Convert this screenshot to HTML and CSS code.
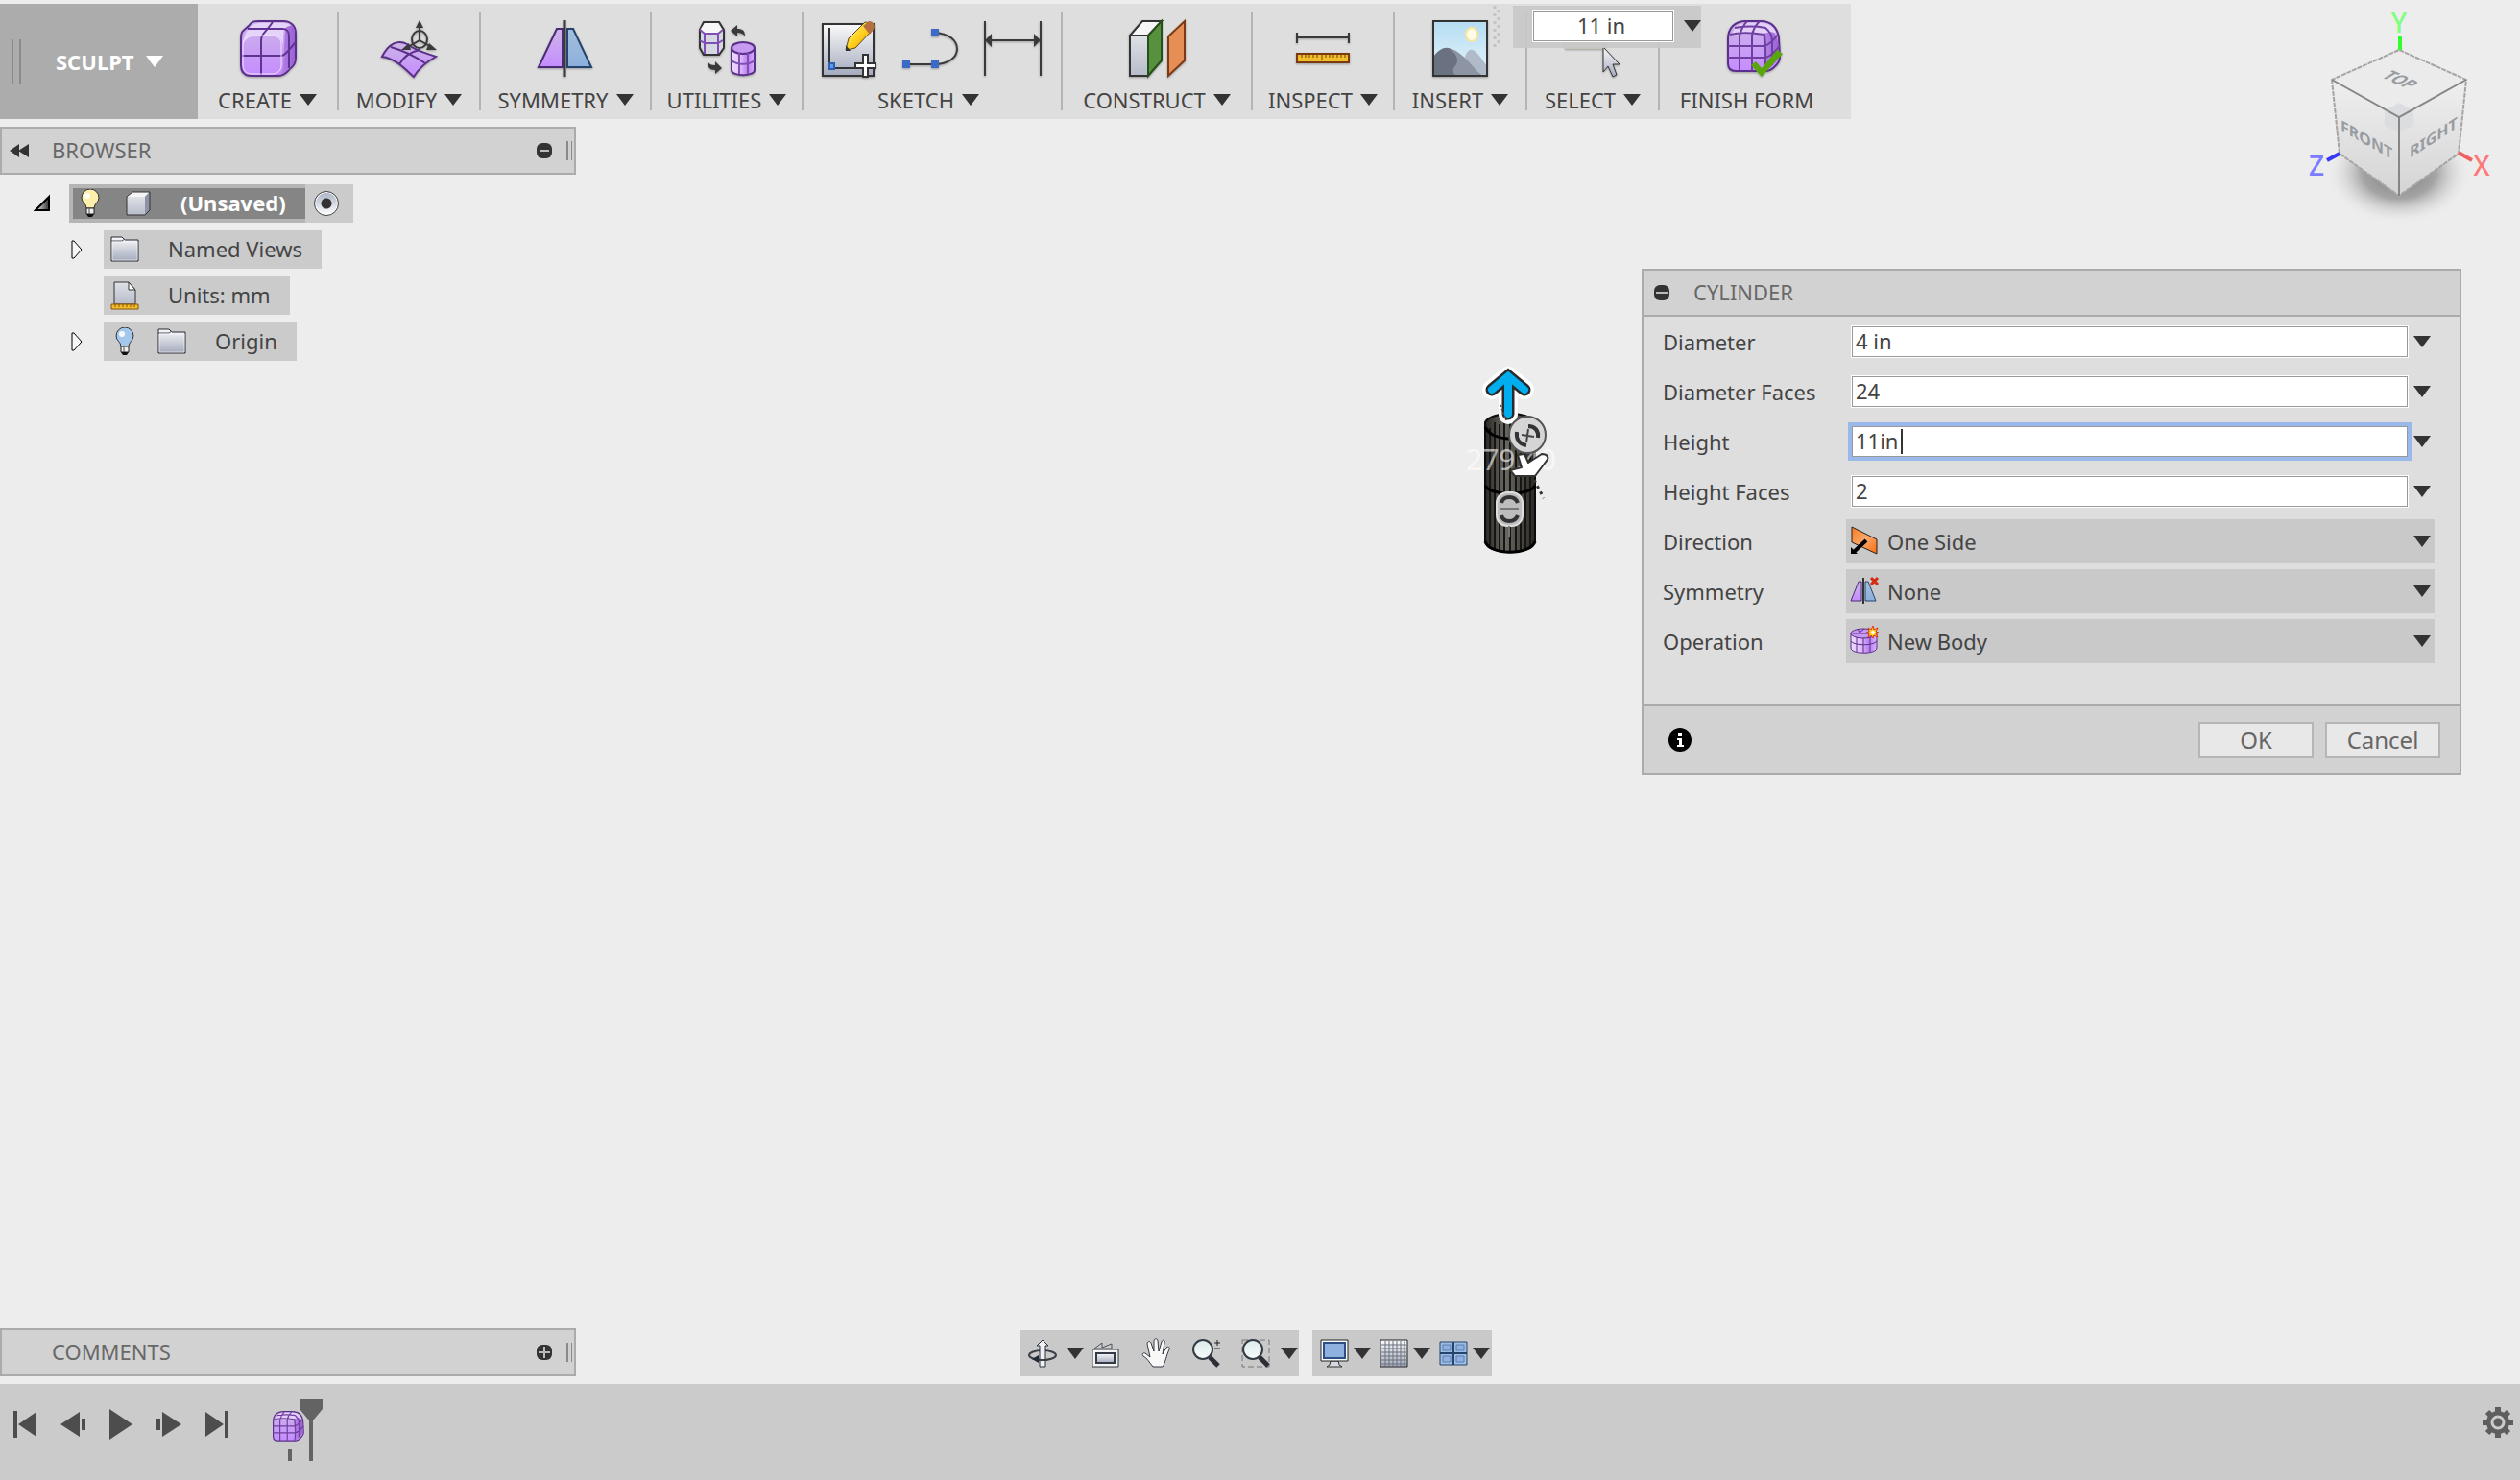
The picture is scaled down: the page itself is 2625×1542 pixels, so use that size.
FILE: index.html
```html
<!DOCTYPE html>
<html lang="en">
<head>
<meta charset="utf-8">
<meta name="viewport" content="width=device-width, initial-scale=1">
<title>Sculpt workspace</title>
<link rel="stylesheet" href="styles.css">
</head>
<body>
<svg class="sprite" aria-hidden="true">
  <defs>
    <linearGradient id="purple" x1="0" y1="0" x2="0" y2="1"><stop offset="0" stop-color="#cdb6e6"/><stop offset="1" stop-color="#c58cff"/></linearGradient>
    <linearGradient id="purple-side" x1="0" y1="0" x2="1" y2="0"><stop offset="0" stop-color="#b98bea"/><stop offset="1" stop-color="#9a5fd6"/></linearGradient>
    <linearGradient id="tube" x1="0" y1="0" x2="1" y2="0"><stop offset="0" stop-color="#ecd9ff"/><stop offset=".35" stop-color="#e2c4fb"/><stop offset=".7" stop-color="#b97df0"/><stop offset="1" stop-color="#d9b3fa"/></linearGradient>
    <linearGradient id="blue" x1="0" y1="0" x2="0" y2="1"><stop offset="0" stop-color="#a5bedd"/><stop offset="1" stop-color="#8bb0dc"/></linearGradient>
    <linearGradient id="steel" x1="0" y1="0" x2="0" y2="1"><stop offset="0" stop-color="#fafafb"/><stop offset="1" stop-color="#a4aabd"/></linearGradient>
    <linearGradient id="silver" x1="0" y1="0" x2="0" y2="1"><stop offset="0" stop-color="#dfe1e6"/><stop offset="1" stop-color="#b7bccb"/></linearGradient>
    <linearGradient id="sky" x1="0" y1="0" x2="0" y2="1"><stop offset="0" stop-color="#b5dcf2"/><stop offset="1" stop-color="#e6f4fb"/></linearGradient>
    <linearGradient id="orange" x1="0" y1="0" x2="1" y2="1"><stop offset="0" stop-color="#ff7a1c"/><stop offset=".5" stop-color="#f6a86c"/><stop offset="1" stop-color="#ff6a0a"/></linearGradient>
    <linearGradient id="pencil" x1="0" y1="0" x2="1" y2="1"><stop offset="0" stop-color="#fff2a0"/><stop offset=".5" stop-color="#ffd21e"/><stop offset="1" stop-color="#f08a00"/></linearGradient>
    <linearGradient id="toggle" x1="0" y1="0" x2="1" y2="0"><stop offset="0" stop-color="#f0f0f0"/><stop offset="1" stop-color="#333"/></linearGradient>
    <linearGradient id="lens" x1="0" y1="0" x2="0" y2="1"><stop offset="0" stop-color="#dcebea"/><stop offset="1" stop-color="#f7fbfb"/></linearGradient>
    <linearGradient id="face" x1="0" y1="0" x2="0" y2="1"><stop offset="0" stop-color="#efefef"/><stop offset="1" stop-color="#d4d4d4"/></linearGradient>
    <radialGradient id="shade"><stop offset="0" stop-color="#777"/><stop offset=".5" stop-color="#8c8c8c" stop-opacity=".75"/><stop offset="1" stop-color="#ededed" stop-opacity="0"/></radialGradient>
    <linearGradient id="barrel" x1="0" y1="0" x2="1" y2="0"><stop offset="0" stop-color="#2a2825"/><stop offset=".4" stop-color="#6a6861"/><stop offset="1" stop-color="#2b2926"/></linearGradient>
  </defs>
  <symbol id="i-caret" viewBox="0 0 18 12"><path d="M0 0h18L9 12z" fill="currentColor"/></symbol>
  <symbol id="i-bulb" viewBox="0 0 20 30">
    <path d="M6 20C6 15 1 14 1 9a9 9 0 0 1 18 0c0 5-5 6-5 11z" fill="currentColor" stroke="#333"/>
    <path d="M6 20h8v6H6z" fill="#eee" stroke="#222"/><path d="M9 20v6" stroke="#555"/><path d="M6 26h8l-2 3H8z" fill="#111"/>
    <circle cx="7" cy="7" r="3" fill="#fff" opacity=".9"/>
  </symbol>
  <symbol id="i-folder" viewBox="0 0 30 28">
    <path d="M1 26V1h11l3 3h14v22z" fill="url(#steel)" stroke="#26282f"/><path d="M1 5h11l3-2" fill="none" stroke="#4a5060"/><path d="M2 25V6h26v19z" fill="none" stroke="#fff" opacity=".6"/>
  </symbol>
  <symbol id="i-form" viewBox="0 0 58 58">
    <path d="M1 20C1 8 8 1 20 1h15c12 0 18 8 19 18l1 20c0 5-8 14-14 14H9c-5 0-8-3-8-8z" fill="url(#purple)" stroke="#5a2f8a" stroke-width="2"/>
    <path d="M37 14C47 8 52 14 53 24l1 14c-3 6-8 12-14 14z" fill="url(#purple-side)"/>
    <path d="M4 17C8 5 14 3 22 3h14c8 0 13 5 15 10-6-2-12 0-14 2H13c-4 0-7 1-9 2z" fill="#e3cff8"/>
    <path d="M3 15c12-3 24-2 36 0 1 8 2 28 0 38M1 27h38c6-2 11-8 14-12M1 39h39c6-1 11-8 15-12M13 53V16C15 9 18 4 21 1M26 53V16c1-6 4-11 8-15M8 8c12-2 22-2 32 0 5 4 7 8 7 14v25" fill="none" stroke="#6e3fa0" stroke-width="2"/>
  </symbol>
</svg>

<header class="toolbar">
  <button class="workspace-switch" type="button"><span class="grip"></span>SCULPT <svg class="caret"><use href="#i-caret"/></svg></button>

  <button class="tool tool-create" type="button">
    <svg class="tool-icon" viewBox="0 0 58 60"><path d="M1 20C1 10 3 12 9 6 13 1 14 1 20 1h25c8 0 13 5 13 13v25c0 8-4 9-8 14-4 4-7 5-11 5H12C5 58 1 54 1 47z" fill="url(#purple)" stroke="#5a2f8a" stroke-width="2"/><path d="M47 8c6-6 10-2 10 6v25c0 7-4 9-8 13-3 4-6 5-9 5 3-2 5-5 5-10z" fill="url(#purple-side)"/><path d="M5 16C10 6 14 3 20 3h25c4 0 6 1 8 3-6 0-8 4-8 12v8c-2-8-5-9-12-9H15c-6 0-9 3-12 8z" fill="#e6d3fa"/><path d="M22 57V22c0-8 3-7 12-20M8 9h36c5 0 7 2 7 8v33M1 37h42c5 0 9-8 15-14" fill="none" stroke="#5f3391" stroke-width="2"/><path d="M3 46V26c0-7 4-10 10-10h20c6 0 10 3 10 10v20c0 7-4 10-10 10H13C7 56 3 53 3 46z" fill="none" stroke="#f0e2ff" stroke-width="1"/></svg>
    <span class="tool-label">CREATE <svg class="caret"><use href="#i-caret"/></svg></span>
  </button>
  <button class="tool tool-modify" type="button">
    <svg class="tool-icon" viewBox="0 0 58 60"><path d="M1 38C8 24 18 20 27 25c9 7 19 9 30 13-9 5-17 11-23 21C24 50 15 40 1 38z" fill="url(#purple)" stroke="#5a2f8a" stroke-width="2"/><path d="M10 28c14 4 26 10 36 17M19 46c5-9 12-13 21-15" fill="none" stroke="#5a2f8a" stroke-width="2"/><g stroke="#3a3a3a" stroke-width="2" fill="none"><ellipse cx="40" cy="20" rx="8" ry="9"/><path d="M40 5v16L26 29M40 21l14 8"/></g><path d="M40 0l4 8h-8zM21 31l8-7 2 7zM58 31l-8-7-3 7z" fill="#3a3a3a"/></svg>
    <span class="tool-label">MODIFY <svg class="caret"><use href="#i-caret"/></svg></span>
  </button>
  <button class="tool tool-symmetry" type="button">
    <svg class="tool-icon" viewBox="0 0 58 60"><path d="M20 9h6v40H1z" fill="url(#purple)" stroke="#4b2a77" stroke-width="2"/><path d="M31 9h6l19 40H31z" fill="url(#blue)" stroke="#24446e" stroke-width="2"/><path d="M28 0v59" stroke="#3a3a3a" stroke-width="3"/></svg>
    <span class="tool-label">SYMMETRY <svg class="caret"><use href="#i-caret"/></svg></span>
  </button>
  <button class="tool tool-utilities" type="button">
    <svg class="tool-icon" viewBox="0 0 58 60"><path d="M5 2h16l5 8v19l-5 7H5l-4-7V10z" fill="#d5d8e0" stroke="#333" stroke-width="2"/><path d="M6 3h14l4 7-4 4H6L2 9z" fill="#f7f7f8"/><path d="M1 10l5 4h14l5-4M6 14v21M20 14v21M1 21l5 3h14l5-3" fill="none" stroke="#7f4fb5" stroke-width="2"/><path d="M34 29v23c0 7 24 7 24 0V29" fill="url(#tube)" stroke="#5a2f8a" stroke-width="2"/><ellipse cx="46" cy="29" rx="12" ry="6" fill="#c79af2" stroke="#5a2f8a" stroke-width="2"/><path d="M34 42c6 5 18 5 24 0M42 34v22M51 34v22" fill="none" stroke="#7f4fb5" stroke-width="2"/><path d="M33 11l7-6v4c6 0 8 2 8 8-2-3-4-4-8-4v4zM24 50l-7 6v-4c-6 0-8-3-8-9 2 3 4 4 8 4v-4z" fill="#3a3a3a"/></svg>
    <span class="tool-label">UTILITIES <svg class="caret"><use href="#i-caret"/></svg></span>
  </button>
  <button class="tool tool-sketch" type="button">
    <span class="tool-icons">
      <svg class="tool-icon" viewBox="0 0 58 60"><path d="M1 4h53v54H1z" fill="url(#steel)" stroke="#333" stroke-width="2"/><path d="M8 8v42h28" fill="none" stroke="#333" stroke-width="2"/><path d="M8 45h5v6H8z" fill="#5b9af0" stroke="#2a60b0" stroke-width="2"/><path d="M25 31l3-12L45 2c4 0 8 4 8 8L35 29z" fill="url(#pencil)" stroke="#5a4a20"/><path d="M43 6l6-5c5 0 8 5 4 10l-3 4z" fill="#b5703f"/><path d="M25 32v-6l5 6z" fill="#333"/><path d="M43 36h5v9h8v5h-8v9h-5v-9h-8v-5h8z" fill="#fff" stroke="#333" stroke-width="2"/></svg>
      <svg class="tool-icon" viewBox="0 0 58 60"><path d="M4 46h29c32 0 32-32 0-33" fill="none" stroke="#3a3a3a" stroke-width="2"/><path d="M0 42h8v8H0zM30 42h8v8h-8zM30 9h8v8h-8z" fill="#3a6bc8"/></svg>
      <svg class="tool-icon tool-icon-dimension" viewBox="0 0 62 60"><path d="M2 1v57M60 1v57M6 21h50" stroke="#3a3a3a" stroke-width="2"/><path d="M2 21l7-7v14zM60 21l-7-7v14z" fill="#3a3a3a"/></svg>
    </span>
    <span class="tool-label">SKETCH <svg class="caret"><use href="#i-caret"/></svg></span>
  </button>
  <button class="tool tool-construct" type="button">
    <svg class="tool-icon" viewBox="0 0 58 60"><path d="M1 16L14 1h20L20 16z" fill="#f6f6f7" stroke="#333" stroke-width="2"/><path d="M1 16h19v42H1z" fill="url(#silver)" stroke="#333" stroke-width="2"/><path d="M20 16L34 1v41L20 58z" fill="#57903f" stroke="#25501a" stroke-width="2"/><path d="M41 17L58 1v41L41 58z" fill="#e58f57" stroke="#7c3b14" stroke-width="2"/></svg>
    <span class="tool-label">CONSTRUCT <svg class="caret"><use href="#i-caret"/></svg></span>
  </button>
  <button class="tool tool-inspect" type="button">
    <svg class="tool-icon" viewBox="0 0 58 60"><path d="M2 13v11M56 13v11M2 18h54" stroke="#3a3a3a" stroke-width="2"/><path d="M2 35h54v9H2z" fill="#efc02c" stroke="#7a3b10" stroke-width="2"/><path d="M7 36v3m4-3v3m4-3v3m4-3v3m4-3v3m5-3v5m4-5v3m4-3v3m4-3v3m4-3v3m4-3v3m4-3v3" stroke="#7a3b10"/></svg>
    <span class="tool-label">INSPECT <svg class="caret"><use href="#i-caret"/></svg></span>
  </button>
  <button class="tool tool-insert" type="button">
    <svg class="tool-icon" viewBox="0 0 58 60"><path d="M1 1h56v57H1z" fill="url(#sky)"/><ellipse cx="41" cy="15" rx="6" ry="7" fill="#fffbe6" stroke="#f8e69a" stroke-width="2"/><path d="M32 46c2-12 6-16 10-15 4 1 10 10 15 17v10H38z" fill="#b0bac8"/><path d="M1 38c8-10 14-11 20-7 10 7 20 18 31 27H1z" fill="#6a7180"/><path d="M18 30c6 4 10 10 7 16-5 6-4 9 0 12h26C42 48 28 30 18 30z" fill="#8d95a5"/><path d="M1 1h56v57H1z" fill="none" stroke="#333" stroke-width="2"/></svg>
    <span class="tool-label">INSERT <svg class="caret"><use href="#i-caret"/></svg></span>
  </button>
  <button class="tool tool-select" type="button">
    <svg class="tool-icon" viewBox="0 0 58 60"><path d="M1 10h40v19H1z" fill="#dde3d3" stroke="#c2c9b7" stroke-width="2"/><path d="M40 28v26l5-6 5 11 4-2-4-11h7z" fill="url(#steel)" stroke="#333" stroke-width="1"/></svg>
    <span class="tool-label">SELECT <svg class="caret"><use href="#i-caret"/></svg></span>
  </button>
  <button class="tool tool-finish" type="button">
    <svg class="tool-icon" viewBox="0 0 58 60"><use href="#i-form" width="58" height="58"/><path d="M25 47l5-4 6 7 16-19 6 4-22 24z" fill="#58a60c"/></svg>
    <span class="tool-label">FINISH FORM</span>
  </button>

  <div class="value-popup">
    <svg class="value-grip" viewBox="0 0 8 44"><path d="M2 0v44M6 4v40" stroke="#c4c4c4" stroke-width="3" stroke-dasharray="3 5"/></svg>
    <div class="value-box">
      <input class="value-input" type="text" value="11 in" aria-label="Height value">
      <button class="drop" type="button" aria-label="Value options"><svg class="caret"><use href="#i-caret"/></svg></button>
    </div>
  </div>
</header>

<main class="workspace">
  <section class="browser" aria-label="Browser">
    <div class="panel">
      <button class="panel-collapse" type="button" aria-label="Collapse"><svg width="20" height="14" viewBox="0 0 20 14"><path d="M10 0v14L0 7zM20 0v14L9 7z" fill="#333"/></svg></button>
      <h2 class="panel-title">BROWSER</h2>
      <button class="panel-toggle" type="button" aria-label="Minimize"><svg width="16" height="16" viewBox="0 0 16 16"><rect width="16" height="16" rx="6" fill="#333"/><path d="M3 8h10" stroke="#bbb" stroke-width="2"/></svg></button>
      <span class="panel-grip"></span>
    </div>
    <ul class="tree">
      <li>
        <div class="tree-row">
          <button class="tree-toggle" type="button" aria-label="Collapse"><svg width="16" height="16" viewBox="0 0 16 16"><path d="M1 15L15 1v14z" fill="url(#toggle)" stroke="#000" stroke-width="2"/></svg></button>
          <div class="tree-item tree-root">
            <div class="tree-selected">
              <svg class="bulb bulb-on"><use href="#i-bulb"/></svg>
              <svg class="component" viewBox="0 0 28 28"><path d="M2 7l6-5h18l-5 5z" fill="#f4f4f6"/><path d="M2 7h19v19H2z" fill="url(#silver)"/><path d="M21 7l5-5v19l-5 5z" fill="#8e93a3"/><path d="M2 7l6-5h18v19l-5 5H2z" fill="none" stroke="#333"/></svg>
              <span class="tree-name">(Unsaved)</span>
            </div>
            <label class="activate"><input type="radio" name="active" aria-label="Activate component" checked></label>
          </div>
        </div>
        <ul class="tree-children">
          <li class="tree-row">
            <button class="tree-toggle" type="button" aria-label="Expand"><svg width="16" height="20" viewBox="0 0 16 20"><path d="M3 1h2l8 9-8 9H3z" fill="#f7f7f7" stroke="#000" stroke-width="1"/></svg></button>
            <div class="tree-item"><svg class="folder"><use href="#i-folder"/></svg><span class="tree-name">Named Views</span></div>
          </li>
          <li class="tree-row">
            <span class="tree-toggle"></span>
            <div class="tree-item"><svg class="folder" viewBox="0 0 30 30"><path d="M4 24V1h15l7 8v15z" fill="url(#silver)" stroke="#333"/><path d="M19 1v8h7z" fill="#fff" stroke="#333"/><path d="M1 24h28v5H1z" fill="#efc02c" stroke="#8a5206"/><path d="M5 24v3m4-3v3m4-3v3m4-3v3m4-3v3m4-3v3" stroke="#8a5206"/></svg><span class="tree-name">Units: mm</span></div>
          </li>
          <li class="tree-row">
            <button class="tree-toggle" type="button" aria-label="Expand"><svg width="16" height="20" viewBox="0 0 16 20"><path d="M3 1h2l8 9-8 9H3z" fill="#f7f7f7" stroke="#000" stroke-width="1"/></svg></button>
            <div class="tree-item"><svg class="bulb bulb-off"><use href="#i-bulb"/></svg><svg class="folder"><use href="#i-folder"/></svg><span class="tree-name">Origin</span></div>
          </li>
        </ul>
      </li>
    </ul>
  </section>

  <svg class="model" viewBox="0 0 150 220" role="img" aria-label="Cylinder preview">
    <path d="M47 70v124c4 15 48 15 52 0V70c-6-12-46-12-52 0z" fill="url(#barrel)" stroke="#0c0c0c" stroke-width="2"/>
    <path d="M52 76v122M57 70v132M62 72v131M67 70v134M73 70v135M79 70v135M84 72v132M89 70v131M94 74v125" stroke="#171512" stroke-width="2"/>
    <path d="M47 75c8 16 42 16 52 0M47 136c6 11 46 11 52 0M47 194c4 15 48 15 52 0" fill="none" stroke="#000" stroke-width="3"/>
    <text class="model-size" x="27" y="120">279.40</text>
    <path d="M71 24v38M54 36l17-14 17 14" fill="none" stroke="#fff" stroke-width="20" stroke-linecap="round" stroke-linejoin="round"/>
    <path d="M71 22v39M54 36l17-14 17 14" fill="none" stroke="#2a2a2a" stroke-width="13" stroke-linecap="round" stroke-linejoin="miter"/>
    <path d="M71 22v39M54 36l17-14 17 14" fill="none" stroke="#00aeef" stroke-width="8" stroke-linecap="round"/>
    <path d="M63 52l6 16" stroke="#555" stroke-width="2" stroke-dasharray="2 2"/>
    <circle cx="91" cy="83" r="19" fill="#d5d5d5" stroke="#555" stroke-width="2"/>
    <path d="M90 94c-7-1-11-6-10-14M92 74c7 0 11 5 10 12" fill="none" stroke="#333" stroke-width="4"/><path d="M85 83l13 2M92 77l-2 14" stroke="#444" stroke-width="2"/>
    <path d="M81 104l7-1 4 9 14-9c6 0 8 4 5 7L99 126H78l-5-6 12-3z" fill="#fff" stroke="#333" stroke-width="2" stroke-linejoin="round"/>
    <path d="M98 130l10 19" stroke="#333" stroke-width="3" stroke-dasharray="3 4"/>
    <rect x="59" y="143" width="27" height="35" rx="11" fill="#bdbdbd" stroke="#dedede" stroke-width="2"/>
    <path d="M64 154c2-8 14-8 17 0M64 167c2 8 14 8 17 0" fill="none" stroke="#333" stroke-width="4"/><path d="M63 160h19M72 178v12" stroke="#777" stroke-width="2"/>
  </svg>

  <svg class="viewcube" viewBox="0 0 200 240" role="img" aria-label="View cube">
    <ellipse cx="79" cy="180" rx="76" ry="54" fill="url(#shade)"/>
    <path d="M9 83l70-31 70 31-70 39z" fill="#ebebeb"/>
    <path d="M9 83l8 77 62 44v-82zM149 83l-8 77-62 44v-82z" fill="url(#face)"/>
    <path d="M79 107l15 8v16l-15 7-15-7v-16z" fill="#dcdde0"/>
    <path d="M9 83l8 77 62 44 62-44 8-77-70-31z" fill="none" stroke="#a5a5a5" stroke-width="2" stroke-dasharray="5 1"/>
    <path d="M9 83l70 39 70-39M79 122v82" fill="none" stroke="#868686" stroke-width="2"/>
    <text class="cube-face" transform="translate(18 136) skewY(29)">FRONT</text>
    <text class="cube-face" transform="translate(90 165) skewY(-33)">RIGHT</text>
    <text class="cube-face" transform="translate(60 80) rotate(25) skewX(-35)">TOP</text>
    <path d="M80 37v15" stroke="#2fff2f" stroke-width="4"/><path d="M17 160l-13 7" stroke="#3838f4" stroke-width="4"/><path d="M141 159l14 8" stroke="#f06060" stroke-width="4"/>
    <text class="axis axis-y" x="79" y="34">Y</text><text class="axis axis-z" x="-7" y="183">Z</text><text class="axis axis-x" x="165" y="183">X</text>
  </svg>

  <form class="dialog" aria-labelledby="dialog-title">
    <header class="dialog-head">
      <button type="button" aria-label="Collapse"><svg width="16" height="16" viewBox="0 0 16 16"><rect width="16" height="16" rx="6" fill="#333"/><path d="M2 8h12" stroke="#bbb" stroke-width="2"/></svg></button>
      <h2 class="panel-title" id="dialog-title">CYLINDER</h2>
    </header>
    <div class="dialog-body">
      <div class="field"><label for="diameter">Diameter</label><div class="text-box"><input id="diameter" type="text" value="4 in"></div><button class="drop" type="button" aria-label="Diameter options"><svg class="caret"><use href="#i-caret"/></svg></button></div>
      <div class="field"><label for="diameter-faces">Diameter Faces</label><div class="text-box"><input id="diameter-faces" type="text" value="24"></div><button class="drop" type="button" aria-label="Diameter face options"><svg class="caret"><use href="#i-caret"/></svg></button></div>
      <div class="field"><label for="height">Height</label><div class="text-box is-active"><input id="height" type="text" value="11in"><span class="text-cursor"></span></div><button class="drop" type="button" aria-label="Height options"><svg class="caret"><use href="#i-caret"/></svg></button></div>
      <div class="field"><label for="height-faces">Height Faces</label><div class="text-box"><input id="height-faces" type="text" value="2"></div><button class="drop" type="button" aria-label="Height face options"><svg class="caret"><use href="#i-caret"/></svg></button></div>
      <div class="field"><label for="direction">Direction</label>
        <div class="select-box"><select id="direction"><option>One Side</option></select>
          <svg class="select-icon" viewBox="0 0 30 30"><path d="M2 1l26 13v15L2 17z" fill="url(#orange)" stroke="#222"/><path d="M17 15L4 27" stroke="#000" stroke-width="4"/><path d="M1 22v7h7z" fill="#000"/></svg>
          <svg class="caret"><use href="#i-caret"/></svg></div></div>
      <div class="field"><label for="symmetry">Symmetry</label>
        <div class="select-box"><select id="symmetry"><option>None</option></select>
          <svg class="select-icon" viewBox="0 0 30 30"><path d="M9 6h3v20H1z" fill="url(#purple)" stroke="#4b2a77"/><path d="M16 6h3l8 20H16z" fill="url(#blue)" stroke="#24446e"/><path d="M14 2v27" stroke="#333" stroke-width="2"/><path d="M22 2l7 7M29 2l-7 7" stroke="#d42a10" stroke-width="3"/></svg>
          <svg class="caret"><use href="#i-caret"/></svg></div></div>
      <div class="field"><label for="operation">Operation</label>
        <div class="select-box"><select id="operation"><option>New Body</option></select>
          <svg class="select-icon" viewBox="0 0 30 30"><path d="M1 8v15c0 7 27 7 27 0V8" fill="url(#tube)" stroke="#5a2f8a"/><ellipse cx="14" cy="8" rx="13" ry="5" fill="#c79af2" stroke="#5a2f8a"/><path d="M1 16c3 5 24 5 27 0M7 12v15M14 13v15M21 12v15M8 3l2 4 5-4M3 8h22" fill="none" stroke="#5a2f8a"/><path d="M24 0l1 4 4-2-2 4 3 1-3 1 2 4-4-2-1 3-2-3-3 2 1-4-3-1 3-1-1-4 3 2z" fill="#ffcf1e" stroke="#e0340c"/><circle cx="24" cy="7" r="2" fill="#fff"/></svg>
          <svg class="caret"><use href="#i-caret"/></svg></div></div>
    </div>
    <footer class="dialog-foot">
      <button class="info" type="button" aria-label="Information"><svg width="24" height="24" viewBox="0 0 24 24"><circle cx="12" cy="12" r="12" fill="#000"/><path d="M10 5h4v3h-4zM9 10h5v7h2v2H9v-2h2v-5H9z" fill="#fff"/></svg></button>
      <button class="btn" type="submit">OK</button>
      <button class="btn" type="button">Cancel</button>
    </footer>
  </form>

  <div class="dock">
    <section class="panel">
      <h2 class="panel-title panel-title-indent">COMMENTS</h2>
      <button class="panel-toggle" type="button" aria-label="Expand"><svg width="16" height="16" viewBox="0 0 16 16"><rect width="16" height="16" rx="6" fill="#333"/><path d="M2 8h12M8 2v12" stroke="#bbb" stroke-width="2"/></svg></button>
      <span class="panel-grip"></span>
    </section>
    <nav class="nav" aria-label="Navigation">
      <div class="nav-bar nav-view">
        <button type="button" aria-label="Orbit"><svg width="30" height="30" viewBox="0 0 30 30"><ellipse cx="15" cy="17" rx="14" ry="5" fill="none" stroke="#3a3f48" stroke-width="2"/><path d="M12 29V7H9l6-6 6 6h-3v22z" fill="#f0f0f6" stroke="#2b303a" stroke-width="1"/><path d="M12 22h8" stroke="#3a3f48" stroke-width="2"/><path d="M4 21l7-4v8z" fill="#222a35"/></svg></button>
        <button type="button" aria-label="Orbit options"><svg class="caret"><use href="#i-caret"/></svg></button>
        <button type="button" aria-label="Look at"><svg width="30" height="30" viewBox="0 0 30 30"><path d="M1 11h27v18H1z" fill="#f4f4f4" stroke="#333a44" stroke-width="1"/><path d="M5 15h19v10H5z" fill="url(#steel)" stroke="#333a44" stroke-width="2"/><path d="M3 10l8-6v5l10-4v5z" fill="#ccc" stroke="#4a505a"/></svg></button>
        <button type="button" aria-label="Pan"><svg width="30" height="32" viewBox="0 0 30 32"><path d="M12 30C8 25 6 21 2 19c-2-2 0-4 2-3l5 4L6 6c0-3 3-3 4-1l3 9V3c0-3 4-3 4 0l1 11 3-10c1-3 4-2 3 1l-2 12 4-7c2-2 4 0 3 2-3 6-4 14-7 18z" fill="#f8f8f8" stroke="#333a44" stroke-width="1" stroke-linejoin="round"/></svg></button>
        <button type="button" aria-label="Zoom"><svg width="30" height="30" viewBox="0 0 30 30"><path d="M19 19l9 9" stroke="#2c2f36" stroke-width="5"/><circle cx="12" cy="11" r="10" fill="url(#lens)" stroke="#333a44" stroke-width="2"/><path d="M24 4h6M27 1v6M24 10h6" stroke="#222"/></svg></button>
        <button type="button" aria-label="Zoom window"><svg width="30" height="30" viewBox="0 0 30 30"><path d="M1 1h28v28H1z" fill="none" stroke="#777" stroke-width="1" stroke-dasharray="6 3"/><path d="M19 19l9 9" stroke="#2c2f36" stroke-width="5"/><circle cx="12" cy="11" r="10" fill="url(#lens)" stroke="#333a44" stroke-width="2"/></svg></button>
        <button type="button" aria-label="Zoom options"><svg class="caret"><use href="#i-caret"/></svg></button>
      </div>
      <div class="nav-bar nav-display">
        <button type="button" aria-label="Display settings"><svg width="30" height="30" viewBox="0 0 30 30"><path d="M11 23h8l1 4 3 2H7l3-2z" fill="#d5dae2" stroke="#333"/><path d="M1 1h28v22H1z" fill="#fafafa" stroke="#222" stroke-width="1"/><path d="M4 4h22v16H4z" fill="#8fb1df" stroke="#2c4f86" stroke-width="2"/></svg><svg class="caret"><use href="#i-caret"/></svg></button>
        <button type="button" aria-label="Grid and snaps"><svg width="30" height="30" viewBox="0 0 30 30"><path d="M1 1h28v28H1z" fill="url(#steel)" stroke="#222" stroke-width="1"/><path d="M6 2v26M10 2v26M14 2v26M18 2v26M22 2v26M26 2v26M2 6h26M2 10h26M2 14h26M2 18h26M2 22h26M2 26h26" stroke="#6b717c"/></svg><svg class="caret"><use href="#i-caret"/></svg></button>
        <button type="button" aria-label="Viewports"><svg width="30" height="26" viewBox="0 0 30 26"><path d="M1 1h28v24H1z" fill="#9dbce2" stroke="#24446e" stroke-width="1"/><path d="M15 1v24M1 13h28" stroke="#24446e" stroke-width="2"/><path d="M4 4h8v6H4zM18 4h8v6h-8zM4 16h8v6H4zM18 16h8v6h-8z" fill="#8fb1df" stroke="#5b7fb0"/></svg><svg class="caret"><use href="#i-caret"/></svg></button>
      </div>
    </nav>
  </div>
</main>

<footer class="timeline">
  <div class="playback">
    <button type="button" aria-label="Go to start"><svg width="24" height="32" viewBox="0 0 24 32"><path d="M0 2h4v28H0zM24 3v26L5 16z" fill="#4d4d4d"/></svg></button>
    <button type="button" aria-label="Step back"><svg width="26" height="32" viewBox="0 0 26 32"><path d="M20 3v26L0 16zM22 10h4v12h-4z" fill="#4d4d4d"/></svg></button>
    <button type="button" aria-label="Play"><svg width="24" height="32" viewBox="0 0 24 32"><path d="M0 0v32l24-16z" fill="#4d4d4d"/></svg></button>
    <button type="button" aria-label="Step forward"><svg width="26" height="32" viewBox="0 0 26 32"><path d="M6 3v26l20-13zM0 10h4v12H0z" fill="#4d4d4d"/></svg></button>
    <button type="button" aria-label="Go to end"><svg width="24" height="32" viewBox="0 0 24 32"><path d="M20 2h4v28h-4zM0 3v26l19-13z" fill="#4d4d4d"/></svg></button>
  </div>
  <svg class="track" viewBox="0 0 54 66" role="img" aria-label="Form feature">
    <use href="#i-form" x="0" y="12" width="34" height="34"/><path d="M16 52h4v12h-4z" fill="#636363"/><path d="M28 0h24v10L42 22v42h-4V22L28 10z" fill="#636363"/>
  </svg>
  <button class="settings" type="button" aria-label="Timeline settings"><svg width="32" height="32" viewBox="0 0 32 32"><path d="M16 0v32M0 16h32M5 5l22 22M27 5L5 27" stroke="#5e5e5e" stroke-width="6"/><circle cx="16" cy="16" r="12" fill="#5e5e5e"/><circle cx="16" cy="16" r="6" fill="#5e5e5e" stroke="#cbcbcb" stroke-width="3"/></svg></button>
</footer>
</body>
</html>
```
FILE: styles.css
```css
* { box-sizing: border-box; }

body {
  margin: 0;
  min-height: 100vh;
  display: flex;
  flex-direction: column;
  background: #ededed;
  color: #444;
  font: 22px/30px "Noto Sans", "Open Sans", sans-serif;
}

button, input, select { font: inherit; color: inherit; }
button { margin: 0; padding: 0; border: 0; background: none; }
svg { display: block; flex: none; overflow: visible; }
ul { list-style: none; margin: 0; padding: 0; }
.sprite { position: absolute; width: 0; height: 0; }
.caret { width: 18px; height: 12px; color: #333; }

/* Toolbar */
.toolbar {
  position: relative;
  display: flex;
  align-self: flex-start;
  height: 120px;
  margin-top: 4px;
  background: #dedede;
}
.workspace-switch {
  display: flex;
  align-items: center;
  gap: 12px;
  width: 206px;
  padding-left: 12px;
  background: #acacac;
  color: #fff;
  font-weight: 700;
  line-height: 30px;
}
.workspace-switch .caret { color: #fff; }
.grip {
  width: 10px;
  height: 46px;
  margin-right: 24px;
  border: solid #8a8a8a;
  border-width: 0 2px;
}
.tool {
  display: flex;
  flex-direction: column;
  align-items: center;
  gap: 8px;
  padding: 17px 2px 0 0;
  background: linear-gradient(#b4b4b4, #b4b4b4) right 9px / 2px 102px no-repeat;
}
.tool-icon { width: 58px; height: 60px; filter: drop-shadow(0 1px 1px rgba(0, 0, 0, .3)); }
.tool-icon-dimension { width: 62px; }
.tool-icons { display: flex; gap: 26px; }
.tool-label { display: flex; align-items: center; gap: 8px; white-space: nowrap; }
.tool-create { width: 147px; }
.tool-modify, .tool-inspect { width: 148px; }
.tool-symmetry { width: 178px; }
.tool-utilities { width: 158px; }
.tool-sketch { width: 270px; }
.tool-sketch .tool-label { margin-right: 8px; }
.tool-construct { width: 198px; }
.tool-insert, .tool-select { width: 138px; }
.tool-finish { width: 199px; padding-right: 18px; background: none; }
.tool-finish .tool-icon { margin-left: 16px; }

/* Floating value entry over the toolbar */
.value-popup { position: absolute; top: 2px; left: 1555px; display: flex; gap: 13px; }
.value-grip { width: 8px; height: 44px; }
.value-box {
  display: flex;
  align-items: center;
  justify-content: space-between;
  width: 196px;
  height: 44px;
  padding: 0 0 2px 21px;
  background: rgba(200, 200, 200, .92);
}
.value-input {
  width: 146px;
  height: 32px;
  padding: 0 4px 2px 0;
  border: 1px solid #999;
  outline: 1px solid #fff;
  background: #fff;
  text-align: center;
}

/* Workspace */
.workspace {
  position: relative;
  flex: 1;
  display: flex;
  flex-direction: column;
  justify-content: space-between;
  padding: 8px 0;
}
.panel {
  display: flex;
  align-items: center;
  width: 600px;
  height: 50px;
  padding-right: 2px;
  border: 2px solid #ababab;
  background: #d2d2d2;
}
.panel-collapse { width: 52px; padding-left: 8px; }
.panel-title { flex: 1; margin: 0; padding-bottom: 2px; color: #686868; font-size: 22px; font-weight: 400; line-height: 30px; }
.panel-title-indent { padding-left: 52px; }
.panel-toggle { margin-right: 15px; }
.panel-grip {
  width: 6px;
  height: 20px;
  border: solid #8a8a8a;
  border-width: 0 1px 0 2px;
}

.tree { padding: 10px 0 0 36px; }
.tree-row { display: flex; align-items: center; margin-bottom: 8px; }
.tree-children { padding-left: 36px; }
.tree-toggle { width: 36px; }
.tree-name { padding-bottom: 2px; }
.tree-item {
  display: flex;
  align-items: center;
  height: 40px;
  padding: 0 20px 0 7px;
  background: #cbcbcb;
}
.folder { width: 30px; height: 30px; margin-right: 30px; }
.bulb { width: 20px; height: 30px; }
.bulb-on { color: #ffefaa; margin-right: 26px; }
.bulb-off { color: #a4c8ec; margin: 0 24px 0 5px; }
.component { width: 28px; height: 28px; margin-right: 30px; }
.tree-root { padding: 0; background: #cbcbcb; }
.tree-selected {
  display: flex;
  align-items: center;
  height: 40px;
  width: 246px;
  padding: 0 0 0 8px;
  border: 4px solid #b5b5b5;
  border-right: 0;
  background: #858585;
  color: #fff;
  font-weight: 700;
}
.activate { display: flex; padding: 0 15px 0 9px; }
.activate input {
  appearance: none;
  width: 26px;
  height: 26px;
  margin: 0;
  border: 1px solid #444;
  border-radius: 50%;
  background: radial-gradient(circle, #333 0 5px, transparent 6px), linear-gradient(#a9b2c6, #fff);
  box-shadow: inset 0 0 0 1px #fff;
}

/* Canvas content */
.model { position: absolute; left: 1500px; top: 246px; width: 150px; height: 220px; }
.model-size { font-size: 30px; fill: #fff; fill-opacity: .6; }
.viewcube { position: absolute; right: 45px; top: -124px; width: 200px; height: 240px; transform: translateX(0); }
.viewcube { right: 5px; }
.cube-face { font-size: 16px; font-weight: 700; fill: #989ca1; }
.axis { font-size: 28px; font-weight: 500; text-anchor: middle; }
.axis-x { fill: #ff7878; }
.axis-y { fill: #80ff80; }
.axis-z { fill: #7c7cff; }

/* Cylinder dialog */
.dialog {
  position: absolute;
  right: 61px;
  top: 156px;
  width: 854px;
  border: 2px solid #ababab;
  background: #dedede;
}
.dialog-head {
  display: flex;
  align-items: center;
  gap: 25px;
  height: 48px;
  padding-left: 11px;
  border-bottom: 2px solid #ababab;
  background: #d2d2d2;
}
.dialog-body {
  display: grid;
  grid-auto-rows: 52px;
  padding: 0 26px 40px 20px;
}
.field { display: flex; align-items: center; }
.field label { width: 191px; }
.text-box { position: relative; flex: 1; margin-left: 6px; }
.text-box input {
  display: block;
  width: 100%;
  height: 32px;
  padding: 0 3px 2px;
  border: 1px solid #999;
  outline: 1px solid #fff;
  background: #fff;
}
.is-active input { outline: 4px solid #99b9ea; }
.text-cursor { position: absolute; left: 51px; top: 3px; width: 2px; height: 26px; background: #333; }
.drop { padding: 8px 0; }
.field .drop { margin: 0 4px 0 6px; }
.select-box { position: relative; flex: 1; }
.select-box select {
  appearance: none;
  display: block;
  width: 100%;
  height: 46px;
  padding: 0 0 0 43px;
  border: 0;
  border-radius: 0;
  background: #c9c9c9;
}
.select-icon { position: absolute; left: 4px; top: 7px; width: 30px; height: 30px; pointer-events: none; }
.select-box .caret { position: absolute; right: 4px; top: 17px; pointer-events: none; }
.dialog-foot {
  display: flex;
  align-items: center;
  gap: 12px;
  height: 71px;
  padding: 0 20px 0 26px;
  border-top: 2px solid #ababab;
  background: #d2d2d2;
}
.info { margin-right: auto; }
.btn {
  width: 120px;
  height: 38px;
  border: 2px solid #b5b5b5;
  background: #e8e8e8;
  color: #666;
  font-size: 24px;
  line-height: 30px;
}

/* Bottom dock */
.dock { display: grid; grid-template-columns: 1fr auto 1fr; align-items: end; }
.nav { display: flex; gap: 14px; padding-right: 8px; }
.nav-bar { display: flex; align-items: center; height: 48px; background: #c9c9c9; }
.nav-view { gap: 22px; padding: 0 1px 0 8px; }
.nav-view button:nth-child(2) { margin: 0 -14px 0 -12px; }
.nav-view button:last-child { margin-left: -11px; }
.nav-display { gap: 9px; padding: 0 2px 0 8px; }
.nav-display button { display: flex; align-items: center; gap: 5px; }

/* Timeline */
.timeline { display: flex; height: 100px; padding: 0 7px 0 1px; background: #cbcbcb; }
.playback { display: flex; }
.playback button { display: flex; align-items: center; justify-content: center; width: 50px; height: 84px; }
.track { width: 54px; height: 66px; margin: 16px 0 0 33px; }
.settings { height: 80px; margin-left: auto; }
```
